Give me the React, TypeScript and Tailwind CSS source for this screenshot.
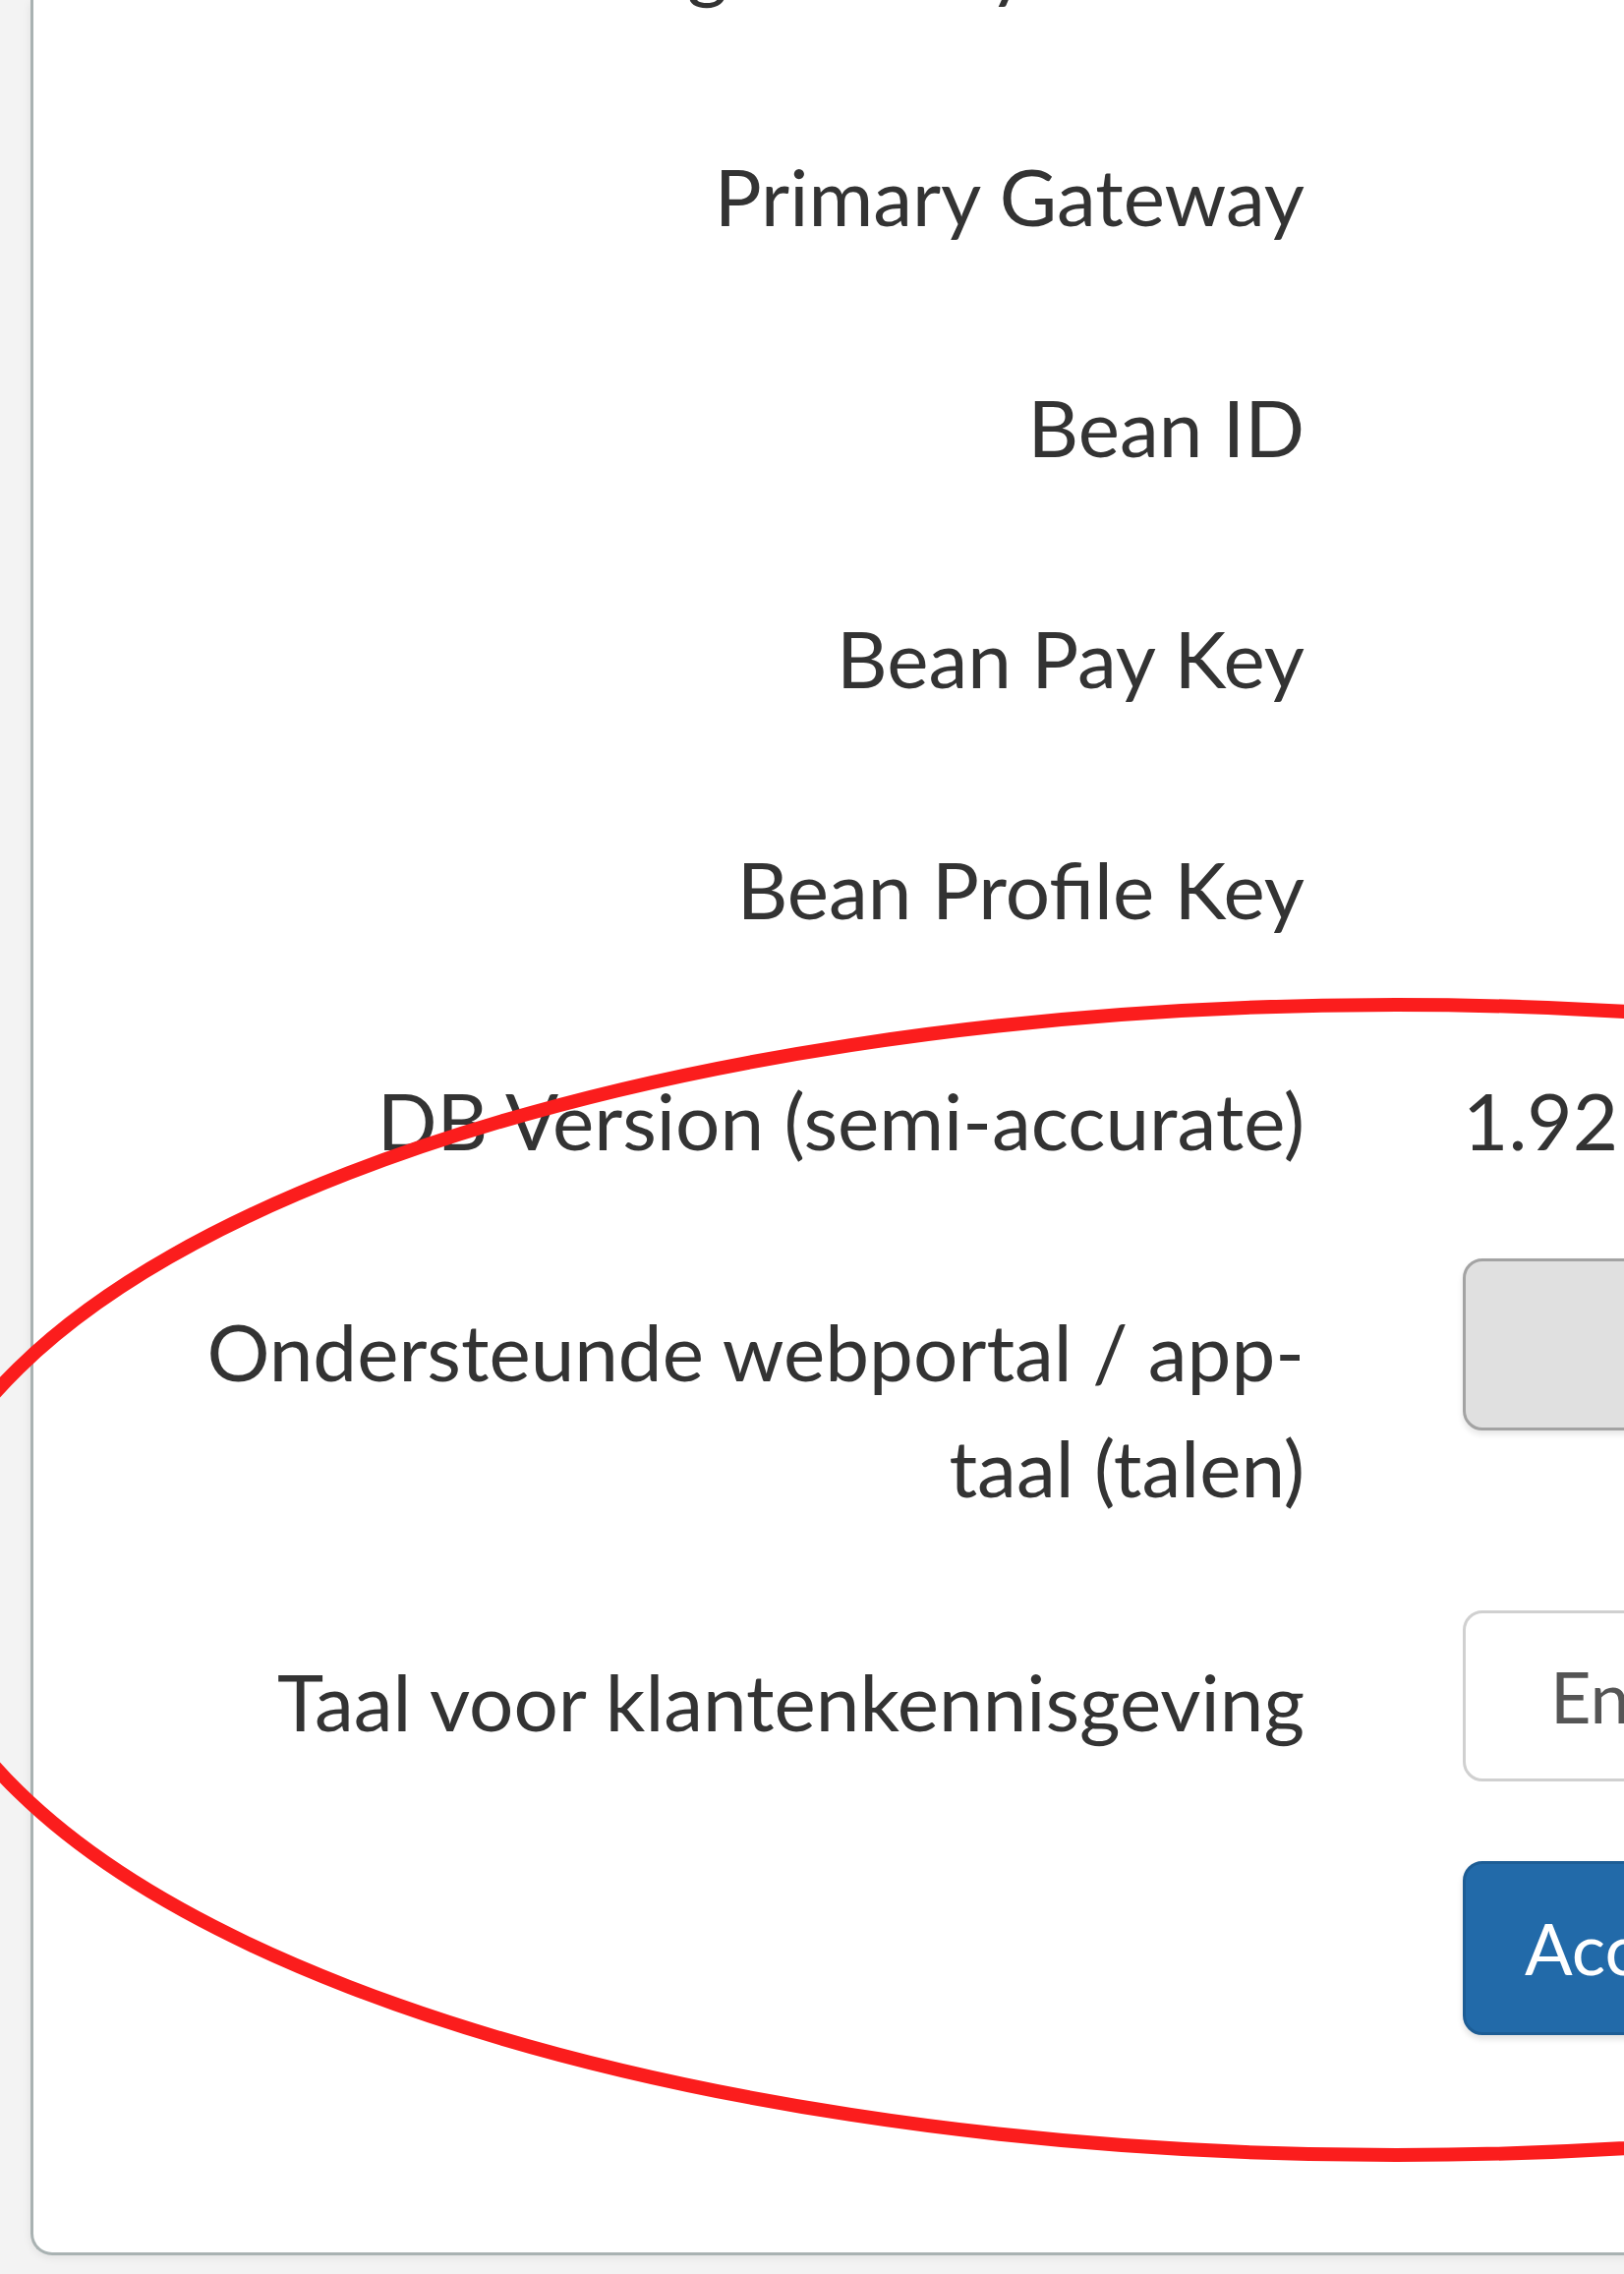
const textRows = ["Billing Country Default", "Primary Gateway", "Bean ID", "Bean Pay Key", "Bean Profile Key"];

function Label({ children, className = "" }: { children: React.ReactNode; className?: string }) {
  return <div className={`w-[1293px] shrink-0 text-right ${className}`}>{children}</div>;
}

export default function App() {
  return (
    <div className="relative h-[2313px] w-[1652px] overflow-hidden bg-[#f3f3f3] pl-[31px] font-['Lato',sans-serif] text-[80px] leading-[118px] text-[#333]">
      <div className="flex h-[2294px] w-[1700px] flex-col rounded-bl-[22px] border-b-[3px] border-l-[3px] border-[#a9b2b2] bg-white shadow-[0_2px_10px_rgba(0,0,0,0.08)]">
        <div className="-mt-[97px] flex flex-col">
          {textRows.map((label, i) => (
            <div key={label} className={`flex ${i === 0 ? "h-[237px]" : "h-[235px]"}`}>
              <Label>{label}</Label>
            </div>
          ))}

          <div className="flex h-[200px]">
            <Label>DB Version (semi-accurate)</Label>
            <div className="ml-[161px]">1.92</div>
          </div>

          <div className="flex items-start">
            <Label className="pt-[35px]">
              Ondersteunde webportal / app-
              <br />
              taal (talen)
            </Label>
            <div className="ml-[161px] h-[175px] w-[400px] rounded-[20px] border-[3px] border-[#a3a3a3] bg-[#e0e0e0] shadow-[0_4px_6px_rgba(0,0,0,0.1)]" />
          </div>

          <div className="mt-[87px] flex items-start">
            <Label className="pt-[33px]">Taal voor klantenkennisgeving</Label>
            <div className="ml-[161px] h-[174px] w-[400px] rounded-[20px] border-[3px] border-[#d0d0d0] bg-white pl-[86px] text-[72px] leading-[168px] text-[#555]">
              English
            </div>
          </div>

          <div className="mt-[81px] flex items-start">
            <div className="w-[1293px] shrink-0" />
            <button className="ml-[161px] h-[177px] w-[500px] rounded-[20px] border-[3px] border-[#1d5d95] bg-[#226aa9] pl-[60px] text-left text-[72px] leading-[171px] text-white shadow-[0_4px_6px_rgba(0,0,0,0.12)]">
              Accepteren
            </button>
          </div>
        </div>
      </div>

      <svg className="pointer-events-none absolute left-0 top-0" width="1652" height="2313">
        <ellipse cx="1420" cy="1607" rx="1507" ry="585" fill="none" stroke="#fb1d1d" strokeWidth="14" />
      </svg>
    </div>
  );
}
